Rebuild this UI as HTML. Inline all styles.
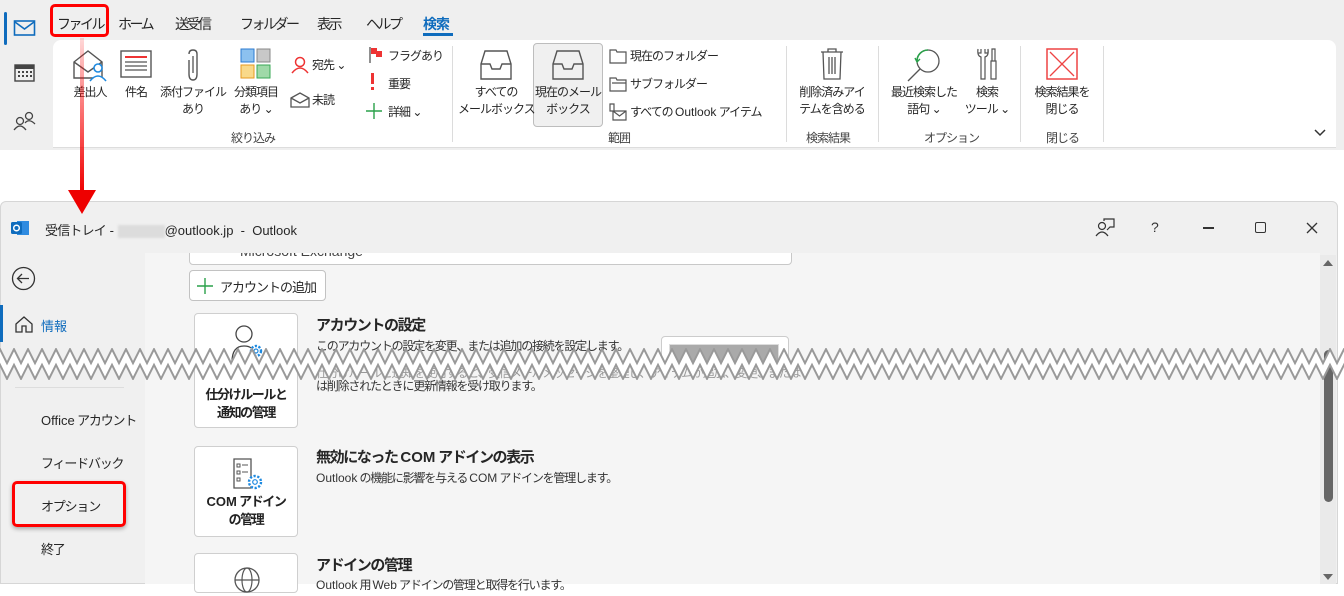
<!DOCTYPE html>
<html><head><meta charset="utf-8"><style>
*{margin:0;padding:0;box-sizing:border-box}
body{width:1344px;height:584px;overflow:hidden;background:#fff;font-family:"Liberation Sans","Noto Sans CJK JP",sans-serif;color:#262626;position:relative}
.a{position:absolute;white-space:nowrap}
.l{letter-spacing:0}
.t{font-size:14px;top:14px;letter-spacing:-2.5px}
.r{font-size:12px;line-height:17px;text-align:center;letter-spacing:-1px}
.gl{font-size:12px;color:#444;top:129px;letter-spacing:-1px}
.sep{position:absolute;top:46px;width:1px;height:96px;background:#dcdcdc}
.nav{font-size:13px;left:41px;letter-spacing:-1.2px}
.card{position:absolute;left:194px;width:104px;background:#fff;border:1px solid #cfcfcf;border-radius:4px}
.ct{font-size:13px;font-weight:bold;text-align:center;line-height:18px;position:absolute;left:0;right:0;color:#222;letter-spacing:-1.4px}
.h{font-size:15px;font-weight:bold;left:316px;color:#262626;letter-spacing:-1.4px}
.d{font-size:12px;left:316px;color:#333;letter-spacing:-1.2px}
</style></head><body>
<!-- top window -->
<div class="a" style="left:0;top:0;width:1344px;height:150px;background:#efefef"></div>
<div class="a" style="left:53px;top:40px;width:1283px;height:108px;background:#fff;border-radius:8px 8px 0 0;border-bottom:1px solid #ddd"></div>
<div class="a" style="left:4px;top:12px;width:3px;height:33px;background:#0f6cbd;border-radius:2px"></div>
<svg class="a" style="left:13px;top:19px" width="24" height="18"><rect x="1.5" y="2" width="20" height="14" fill="none" stroke="#0f6cbd" stroke-width="1.6"/><path d="M2 3 L11.5 10 L21 3" fill="none" stroke="#0f6cbd" stroke-width="1.6"/></svg>
<svg class="a" style="left:14px;top:63px" width="22" height="20"><rect x="1" y="2" width="19" height="16" fill="none" stroke="#444" stroke-width="1.4"/><rect x="1" y="2" width="19" height="4" fill="#444"/><g fill="#444"><rect x="4" y="8" width="2" height="2"/><rect x="8" y="8" width="2" height="2"/><rect x="12" y="8" width="2" height="2"/><rect x="16" y="8" width="2" height="2"/><rect x="4" y="12" width="2" height="2"/><rect x="8" y="12" width="2" height="2"/><rect x="12" y="12" width="2" height="2"/><rect x="16" y="12" width="2" height="2"/></g></svg>
<svg class="a" style="left:12px;top:110px" width="26" height="22"><circle cx="8" cy="11" r="3.5" fill="none" stroke="#444" stroke-width="1.3"/><path d="M2 20 Q8 12 14 20" fill="none" stroke="#444" stroke-width="1.3"/><circle cx="17" cy="6" r="3.5" fill="none" stroke="#444" stroke-width="1.3"/><path d="M13 13 Q17 8 23 14" fill="none" stroke="#444" stroke-width="1.3"/></svg>

<div class="a t" style="left:57px">ファイル</div>
<div class="a t" style="left:118px">ホーム</div>
<div class="a t" style="left:175px">送受信</div>
<div class="a t" style="left:240px">フォルダー</div>
<div class="a t" style="left:317px">表示</div>
<div class="a t" style="left:366px">ヘルプ</div>
<div class="a t" style="left:423px;color:#0f6cbd;font-weight:bold;letter-spacing:-1px">検索</div>
<div class="a" style="left:423px;top:33px;width:30px;height:3px;background:#0f6cbd"></div>
<div class="a" style="left:50px;top:4px;width:59px;height:33px;border:3px solid #f00;border-radius:5px"></div>

<!-- ribbon icons -->
<svg class="a" style="left:72px;top:48px" width="36" height="34"><path d="M2 14 L16 3 L30 14 V30 H2 Z" fill="none" stroke="#555" stroke-width="1.4"/><path d="M2 14 L16 24 L30 14" fill="none" stroke="#555" stroke-width="1.4"/><circle cx="26" cy="20" r="4" fill="#fff" stroke="#1e8ae0" stroke-width="1.6"/><path d="M18 33 Q26 23 34 33" fill="#fff" stroke="#1e8ae0" stroke-width="1.6"/></svg>
<svg class="a" style="left:120px;top:50px" width="32" height="28"><rect x="1" y="1" width="30" height="26" fill="none" stroke="#555" stroke-width="1.4"/><path d="M5 7H27" stroke="#e33" stroke-width="2"/><path d="M5 12H27M5 16H27M5 20H27" stroke="#555" stroke-width="1.3"/></svg>
<svg class="a" style="left:183px;top:48px" width="20" height="34"><path d="M6 12 V26 Q6 32 10 32 Q14 32 14 26 V6 Q14 2 10 2 Q6 2 6 6" fill="none" stroke="#555" stroke-width="1.4"/><path d="M10 8 V25" stroke="#555" stroke-width="1.3"/></svg>
<svg class="a" style="left:240px;top:48px" width="32" height="32"><rect x="1" y="1" width="13" height="13" fill="#8cc1ef" stroke="#2b7bd0"/><rect x="17" y="1" width="13" height="13" fill="#c8c8c8" stroke="#888"/><rect x="1" y="17" width="13" height="13" fill="#f9d98a" stroke="#e69a20"/><rect x="17" y="17" width="13" height="13" fill="#9fd9a8" stroke="#3aa856"/></svg>
<div class="a r" style="left:67px;top:84px;width:46px">差出人</div>
<div class="a r" style="left:116px;top:84px;width:40px">件名</div>
<div class="a r" style="left:160px;top:84px;width:66px">添付ファイル<br>あり</div>
<div class="a r" style="left:227px;top:84px;width:58px">分類項目<br>あり ⌄</div>
<svg class="a" style="left:291px;top:56px" width="18" height="18"><circle cx="9" cy="6" r="4.5" fill="none" stroke="#e33" stroke-width="1.5"/><path d="M1 17 Q9 7 17 17" fill="none" stroke="#e33" stroke-width="1.5"/></svg>
<div class="a r" style="left:312px;top:57px">宛先 ⌄</div>
<svg class="a" style="left:290px;top:92px" width="20" height="16"><path d="M1 6 L10 1 L19 6 V15 H1 Z M1 6 L10 11 L19 6" fill="none" stroke="#555" stroke-width="1.3"/></svg>
<div class="a r" style="left:312px;top:92px">未読</div>
<svg class="a" style="left:368px;top:46px" width="16" height="18"><path d="M2 1V17" stroke="#555" stroke-width="1.3"/><path d="M3 2H9V5H14V11H8V8H3Z" fill="#e33"/></svg>
<div class="a r" style="left:388px;top:48px">フラグあり</div>
<div class="a" style="left:371px;top:73px;width:3px;height:11px;background:#e33"></div>
<div class="a" style="left:371px;top:87px;width:3px;height:3px;background:#e33"></div>
<div class="a r" style="left:388px;top:76px">重要</div>
<svg class="a" style="left:366px;top:103px" width="16" height="16"><path d="M8 0V16M0 8H16" stroke="#2aa14a" stroke-width="1.4"/></svg>
<div class="a r" style="left:388px;top:104px">詳細 ⌄</div>
<div class="a gl" style="left:231px">絞り込み</div>
<div class="sep" style="left:452px"></div>

<div class="a" style="left:533px;top:43px;width:70px;height:84px;background:#f0f0f0;border:1px solid #bdbdbd;border-radius:4px"></div>
<svg class="a" style="left:480px;top:50px" width="32" height="30"><path d="M5 1H27L31 14V29H1V14Z M1 14H10L12 19H20L22 14H31" fill="none" stroke="#555" stroke-width="1.4"/></svg>
<svg class="a" style="left:552px;top:50px" width="32" height="30"><path d="M5 1H27L31 14V29H1V14Z M1 14H10L12 19H20L22 14H31" fill="none" stroke="#555" stroke-width="1.4"/></svg>
<div class="a r" style="left:458px;top:84px;width:76px">すべての<br>メールボックス</div>
<div class="a r" style="left:531px;top:84px;width:74px">現在のメール<br>ボックス</div>
<svg class="a" style="left:609px;top:49px" width="18" height="15"><path d="M1 1H7L8 3H17V14H1Z" fill="none" stroke="#555" stroke-width="1.2"/></svg>
<div class="a r" style="left:630px;top:48px">現在のフォルダー</div>
<svg class="a" style="left:609px;top:77px" width="18" height="15"><path d="M1 1H7L8 3H17V14H1Z M3 6H17" fill="none" stroke="#555" stroke-width="1.2"/></svg>
<div class="a r" style="left:630px;top:76px">サブフォルダー</div>
<svg class="a" style="left:609px;top:103px" width="18" height="18"><path d="M1 1H5V8H1Z M4 8H17V17H4Z M4 8L10.5 13L17 8" fill="none" stroke="#555" stroke-width="1.2"/></svg>
<div class="a r" style="left:630px;top:104px">すべての <span class="l">Outlook</span> アイテム</div>
<div class="a gl" style="left:608px">範囲</div>
<div class="sep" style="left:786px"></div>

<svg class="a" style="left:820px;top:47px" width="24" height="34"><path d="M1 5H23M8 5V2H16V5M3 5L4 32H20L21 5M9 10V27M12 10V27M15 10V27" fill="none" stroke="#555" stroke-width="1.3"/></svg>
<div class="a r" style="left:794px;top:84px;width:76px">削除済みアイ<br>テムを含める</div>
<div class="a gl" style="left:806px">検索結果</div>
<div class="sep" style="left:878px"></div>

<svg class="a" style="left:906px;top:47px" width="36" height="36"><circle cx="22" cy="14" r="11" fill="none" stroke="#555" stroke-width="1.3"/><path d="M14 22 L2 34" stroke="#555" stroke-width="1.3"/><path d="M11 14 A11 11 0 0 1 22 3" fill="none" stroke="#2aa14a" stroke-width="1.6"/><path d="M9 11 L11 15 L14 12" fill="none" stroke="#2aa14a" stroke-width="1.4"/></svg>
<div class="a r" style="left:884px;top:84px;width:80px">最近検索した<br>語句 ⌄</div>
<svg class="a" style="left:976px;top:47px" width="22" height="34"><path d="M2 2 Q1 9 5 10 V32 H9 V10 Q13 9 12 2 V6 H9 V2 M5 2 V6 H2" fill="none" stroke="#555" stroke-width="1.2"/><path d="M16 2H19V14H16Z M15 14H20V32H15Z" fill="none" stroke="#555" stroke-width="1.2"/></svg>
<div class="a r" style="left:962px;top:84px;width:50px">検索<br>ツール ⌄</div>
<div class="a gl" style="left:924px">オプション</div>
<div class="sep" style="left:1020px"></div>
<svg class="a" style="left:1046px;top:48px" width="32" height="32"><rect x="1" y="1" width="30" height="30" fill="#fff" stroke="#e44" stroke-width="1.5"/><path d="M4 4L28 28M28 4L4 28" stroke="#e44" stroke-width="1.3"/></svg>
<div class="a r" style="left:1024px;top:84px;width:76px">検索結果を<br>閉じる</div>
<div class="a gl" style="left:1046px">閉じる</div>
<div class="sep" style="left:1103px"></div>
<svg class="a" style="left:1314px;top:129px" width="12" height="8"><path d="M1 1L6 6L11 1" fill="none" stroke="#333" stroke-width="1.5"/></svg>

<!-- second window -->
<div class="a" style="left:0;top:201px;width:1338px;height:383px;background:#f0f0f0;border:1px solid #d6d6d6;border-radius:6px 6px 0 0"></div>
<div class="a" style="left:145px;top:253px;width:1175px;height:331px;background:#f5f5f5"></div>

<div class="a" style="left:189px;top:240px;width:603px;height:25px;background:#fff;border:1px solid #c8c8c8;border-radius:4px"></div>
<div class="a" style="left:240px;top:243px;font-size:14px;color:#444">Microsoft Exchange</div>
<div class="a" style="left:145px;top:202px;width:1175px;height:51px;background:#f0f0f0"></div>

<svg class="a" style="left:10px;top:219px" width="20" height="18"><rect x="7" y="2" width="12" height="14" fill="#2f8be0"/><rect x="1" y="3" width="11" height="12" rx="1.5" fill="#0f6cbd"/><circle cx="6.5" cy="9" r="2.8" fill="none" stroke="#fff" stroke-width="1.5"/></svg>
<div class="a" style="left:45px;top:220px;font-size:13px"><span style="letter-spacing:-0.8px">受信トレイ</span> - <span style="display:inline-block;width:47px;height:13px;background:#dcdcdc;vertical-align:middle;filter:blur(1px)"></span>@outlook.jp&nbsp; -&nbsp; Outlook</div>
<svg class="a" style="left:1095px;top:218px" width="20" height="20"><circle cx="7" cy="8" r="3.5" fill="none" stroke="#333" stroke-width="1.2"/><path d="M1 18 Q7 10 13 18" fill="none" stroke="#333" stroke-width="1.2"/><path d="M9 3V1H19V9H15L12 12" fill="none" stroke="#333" stroke-width="1.2"/></svg>
<div class="a" style="left:1151px;top:219px;font-size:14px;color:#333">?</div>
<div class="a" style="left:1203px;top:227px;width:11px;height:1.5px;background:#333"></div>
<div class="a" style="left:1255px;top:222px;width:11px;height:11px;border:1.3px solid #333;border-radius:2px"></div>
<svg class="a" style="left:1306px;top:222px" width="12" height="12"><path d="M1 1L11 11M11 1L1 11" stroke="#333" stroke-width="1.3"/></svg>

<svg class="a" style="left:11px;top:266px" width="25" height="25"><circle cx="12.5" cy="12.5" r="11" fill="none" stroke="#333" stroke-width="1.3"/><path d="M18 12.5H7M11 8L6.5 12.5L11 17" fill="none" stroke="#333" stroke-width="1.3"/></svg>
<div class="a" style="left:0;top:305px;width:3px;height:37px;background:#0f6cbd"></div>
<svg class="a" style="left:15px;top:316px" width="18" height="17"><path d="M1 8L9 1L17 8V16H11V10H7V16H1Z" fill="none" stroke="#333" stroke-width="1.3"/></svg>
<div class="a" style="left:41px;top:316px;font-size:13px;color:#0f6cbd">情報</div>
<div class="a" style="left:15px;top:387px;width:109px;height:1px;background:#ddd"></div>
<div class="a nav" style="top:410px"><span class="l">Office</span> アカウント</div>
<div class="a nav" style="top:453px">フィードバック</div>
<div class="a nav" style="top:496px">オプション</div>
<div class="a nav" style="top:539px">終了</div>
<div class="a" style="left:12px;top:481px;width:114px;height:46px;border:3px solid #f00;border-radius:5px;box-shadow:0 2px 4px rgba(0,0,0,.3)"></div>

<div class="a" style="left:189px;top:270px;width:137px;height:31px;background:#fff;border:1px solid #c2c2c2;border-radius:4px"></div>
<svg class="a" style="left:197px;top:278px" width="16" height="16"><path d="M8 0V16M0 8H16" stroke="#2aa14a" stroke-width="1.4"/></svg>
<div class="a" style="left:220px;top:277px;font-size:13px;letter-spacing:-1px">アカウントの追加</div>

<div class="card" style="top:313px;height:115px">
<svg class="a" style="left:36px;top:10px" width="34" height="40"><circle cx="13" cy="10" r="8" fill="none" stroke="#444" stroke-width="1.3"/><path d="M1 38 Q1 22 13 22 Q18 22 20 24" fill="none" stroke="#444" stroke-width="1.3"/><circle cx="25" cy="27" r="5" fill="none" stroke="#1e8ae0" stroke-width="2.4" stroke-dasharray="2.2 1.5"/><circle cx="25" cy="27" r="2" fill="none" stroke="#1e8ae0" stroke-width="1.2"/></svg>
<div class="ct" style="top:72px">仕分けルールと<br>通知の管理</div></div>
<div class="card" style="top:446px;height:91px">
<svg class="a" style="left:38px;top:11px" width="32" height="34"><path d="M1 1H18V30H1Z" fill="none" stroke="#555" stroke-width="1.3"/><path d="M4 6H7V9H4ZM4 13H7V16H4ZM4 20H7V23H4Z" fill="none" stroke="#555"/><path d="M9 7H15M9 14H15" stroke="#555"/><circle cx="22" cy="24" r="6" fill="#fff" stroke="#1e8ae0" stroke-width="2.4" stroke-dasharray="2.2 1.6"/><circle cx="22" cy="24" r="2.3" fill="none" stroke="#1e8ae0" stroke-width="1.2"/></svg>
<div class="ct" style="top:46px"><span class="l">COM</span> アドイン<br>の管理</div></div>
<div class="card" style="top:553px;height:40px">
<svg class="a" style="left:38px;top:12px" width="30" height="30"><circle cx="14" cy="14" r="12" fill="none" stroke="#555" stroke-width="1.3"/><ellipse cx="14" cy="14" rx="5" ry="12" fill="none" stroke="#555" stroke-width="1.2"/><path d="M2 14H26" stroke="#555" stroke-width="1.2"/></svg></div>

<div class="a h" style="top:314px">アカウントの設定</div>
<div class="a d" style="top:337px">このアカウントの設定を変更、または追加の接続を設定します。</div>
<div class="a d" style="top:377px">は削除されたときに更新情報を受け取ります。</div>
<div class="a d" style="top:364px;color:#999">仕分けルールと通知を使用すると、受信メールメッセージを整理し、アイテムが追加、変更、または</div>
<div class="a" style="left:661px;top:336px;width:128px;height:32px;background:#fff;border:1px solid #ccc;border-radius:4px"></div>
<div class="a" style="left:669px;top:344px;width:110px;height:24px;background:#aaa;border:1px solid #ddd"></div>
<div class="a h" style="top:446px">無効になった <span class="l">COM</span> アドインの表示</div>
<div class="a d" style="top:469px"><span class="l">Outlook</span> の機能に影響を与える <span class="l">COM</span> アドインを管理します。</div>
<div class="a h" style="top:554px">アドインの管理</div>
<div class="a d" style="top:576px"><span class="l">Outlook</span> 用 <span class="l">Web</span> アドインの管理と取得を行います。</div>

<div class="a" style="left:1320px;top:255px;width:16px;height:329px;background:#eaeaea"></div>
<svg class="a" style="left:1323px;top:259px" width="10" height="8"><path d="M0 7L5 1L10 7Z" fill="#666"/></svg>
<div class="a" style="left:1324px;top:350px;width:9px;height:152px;background:#666;border-radius:5px"></div>
<svg class="a" style="left:1323px;top:573px" width="10" height="8"><path d="M0 1L5 7L10 1Z" fill="#666"/></svg>

<!-- zigzag -->
<svg class="a" style="left:0;top:348px" width="1344" height="32">
<defs><pattern id="z" width="14" height="32" patternUnits="userSpaceOnUse">
<path d="M-7,23 L0,9 L7,23 L14,9 L21,23" fill="none" stroke="#999" stroke-width="9"/>
<path d="M-7,23 L0,9 L7,23 L14,9 L21,23" fill="none" stroke="#fff" stroke-width="5"/></pattern></defs>
<rect width="1344" height="32" fill="url(#z)"/></svg>

<!-- red arrow -->
<svg class="a" style="left:60px;top:36px" width="46" height="184"><defs><linearGradient id="g" x1="0" y1="0" x2="0" y2="1"><stop offset="0" stop-color="#f00" stop-opacity="0.15"/><stop offset="1" stop-color="#e00"/></linearGradient></defs><path d="M20 2H24V156H20Z" fill="url(#g)"/><path d="M8 154H36L22 178Z" fill="#e00"/></svg>
</body></html>
